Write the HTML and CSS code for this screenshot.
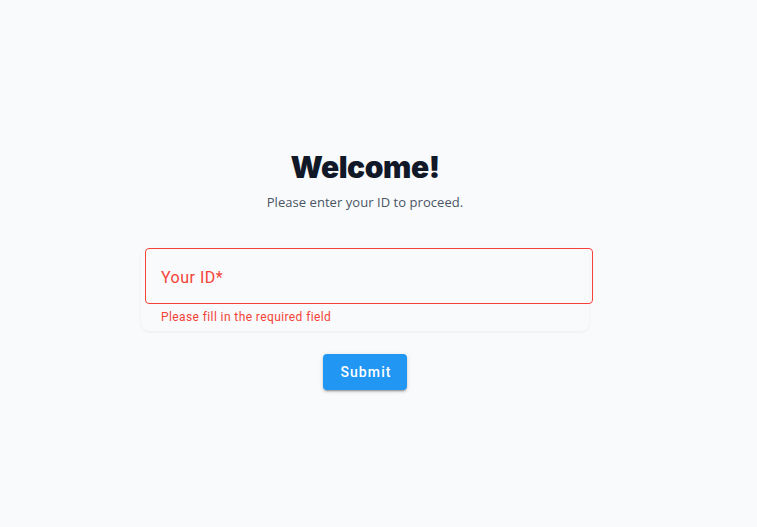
FILE: index.html
```html
<!DOCTYPE html>
<html lang="en">
<head>
<meta charset="utf-8">
<title>Welcome</title>
<link rel="stylesheet" href="styles.css">
</head>
<body>
<main class="page">
  <section class="column">
    <h1 class="title">Welcome!</h1>
    <p class="subtitle">Please enter your ID to proceed.</p>
    <div class="card">
      <div class="field">
        <span class="label">Your ID*</span>
      </div>
      <p class="helper">Please fill in the required field</p>
    </div>
    <button class="submit" type="button">Submit</button>
  </section>
</main>
</body>
</html>
```

FILE: styles.css
```css
* { box-sizing: border-box; }
html, body { margin: 0; padding: 0; }
body {
  background: #f8fafc;
  width: 757px;
  height: 527px;
  overflow: hidden;
}
.page {
  display: flex;
  justify-content: center;
  padding-right: 27px;
  padding-top: 148px;
}
.column {
  width: 448px;
  display: flex;
  flex-direction: column;
  align-items: center;
}
.title {
  margin: 0;
  font-family: Inter, "Noto Sans", sans-serif;
  font-weight: 900;
  font-size: 30px;
  line-height: 38px;
  color: #111827;
  letter-spacing: -0.45px;
}
.subtitle {
  margin: 7px 0 0;
  font-family: "Open Sans", "Noto Sans", sans-serif;
  font-size: 13px;
  line-height: 18px;
  color: #4b5563;
  letter-spacing: 0.05px;
}
.card {
  align-self: stretch;
  margin-top: 37px;
  border-radius: 8px;
  box-shadow: 0 1px 3px rgba(0,0,0,0.06);
  background: #f8fafc;
  padding-bottom: 6px;
}
.field {
  margin-left: 4px;
  width: 448px;
  height: 56px;
  border: 1px solid #f44336;
  border-radius: 4px;
  display: flex;
  align-items: center;
  padding-left: 15px;
  padding-top: 3px;
}
.label {
  font-family: Roboto, sans-serif;
  font-size: 16px;
  color: #f44336;
  letter-spacing: 0.5px;
}
.helper {
  margin: 5px 0 0 20px;
  font-family: Roboto, sans-serif;
  font-size: 12px;
  line-height: 16px;
  color: #f44336;
  letter-spacing: 0.4px;
}
.submit {
  margin-top: 23px;
  width: 84px;
  height: 36px;
  border: none;
  border-radius: 4px;
  background: #2196f3;
  color: #fff;
  font-family: Roboto, sans-serif;
  font-weight: 500;
  font-size: 14px;
  letter-spacing: 1.1px;
  padding: 0 0 0 2px;
  box-shadow: 0 3px 1px -2px rgba(0,0,0,0.2), 0 2px 2px 0 rgba(0,0,0,0.14), 0 1px 5px 0 rgba(0,0,0,0.12);
  cursor: pointer;
}
```
